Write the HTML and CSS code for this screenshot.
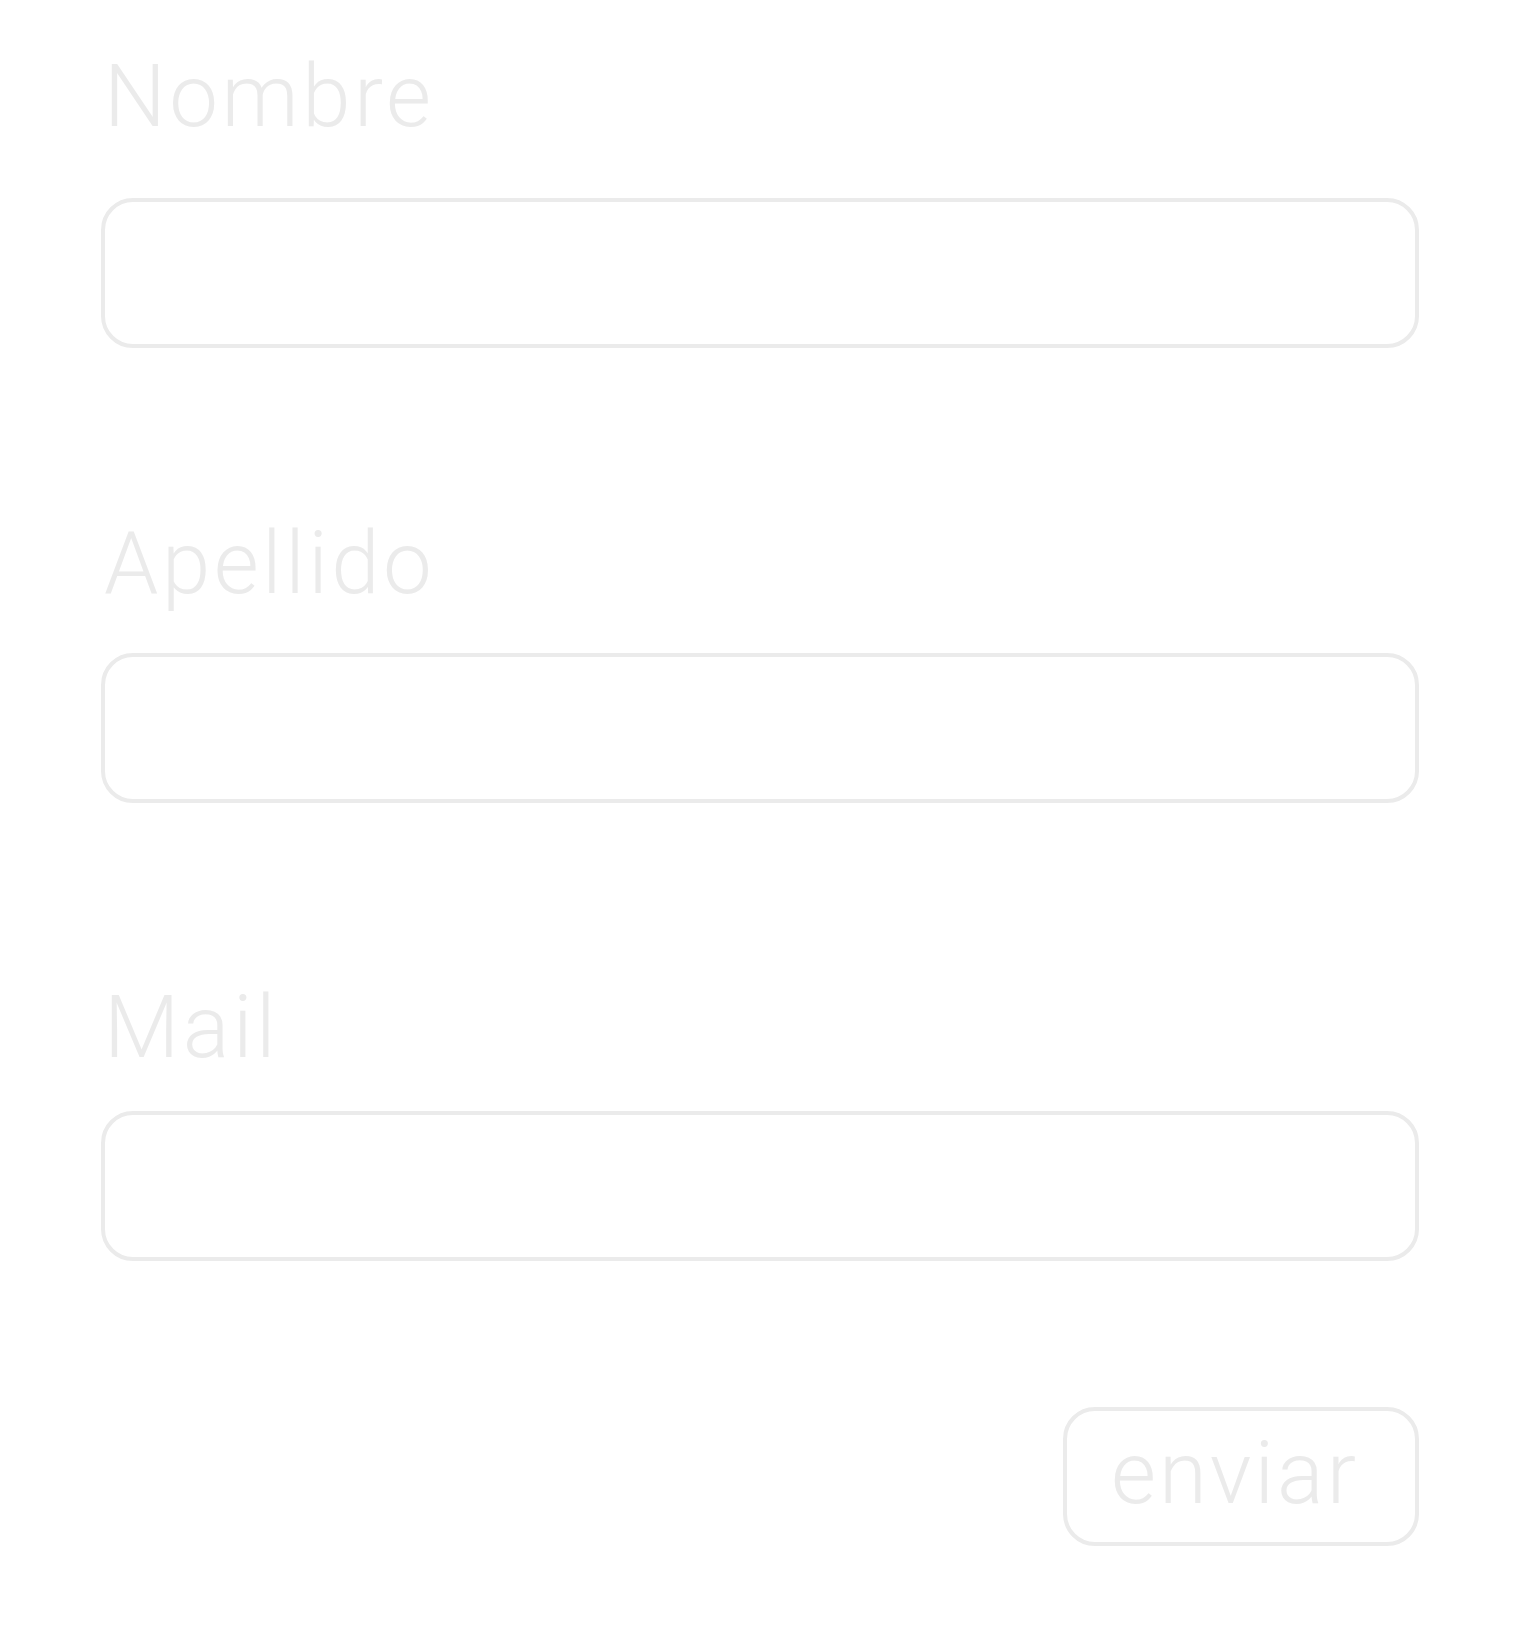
FILE: index.html
```html
<!DOCTYPE html>
<html lang="es">
<head>
<meta charset="utf-8">
<title>Formulario</title>
<link rel="stylesheet" href="styles.css">
</head>
<body>
<form class="form">
  <div class="field field-1">
    <label class="label" for="nombre">Nombre</label>
    <input class="input" id="nombre" type="text">
  </div>
  <div class="field field-2">
    <label class="label" for="apellido">Apellido</label>
    <input class="input" id="apellido" type="text">
  </div>
  <div class="field field-3">
    <label class="label" for="mail">Mail</label>
    <input class="input" id="mail" type="email">
  </div>
  <div class="actions">
    <button class="btn" type="button">enviar</button>
  </div>
</form>
</body>
</html>
```

FILE: styles.css
```css
html, body {
  margin: 0;
  padding: 0;
  background: #ffffff;
}
.form {
  display: flex;
  flex-direction: column;
  width: 1318px;
  margin-left: 101px;
  padding-top: 53px;
  font-family: Roboto, "Liberation Sans", sans-serif;
  font-weight: 300;
  color: #ebebeb;
}
.field {
  display: flex;
  flex-direction: column;
}
.label {
  display: block;
  font-size: 87px;
  line-height: 87px;
  height: 87px;
  padding-left: 3px;
  letter-spacing: 3.5px;
  color: #ebebeb;
}
.field-1 .label { margin-bottom: 58px; }
.field-2 { margin-top: 172px; }
.field-2 .label { margin-bottom: 46px; }
.field-3 { margin-top: 181px; }
.field-3 .label { margin-bottom: 40px; }
.input {
  box-sizing: border-box;
  width: 100%;
  height: 150px;
  margin: 0;
  border: 4px solid #ebebeb;
  border-radius: 32px;
  background: #fff;
  outline: none;
  font: inherit;
}
.actions {
  display: flex;
  justify-content: flex-end;
  margin-top: 146px;
}
.btn {
  box-sizing: border-box;
  width: 356px;
  height: 139px;
  border: 4px solid #ebebeb;
  border-radius: 32px;
  background: #fff;
  color: #ebebeb;
  font-family: Roboto, "Liberation Sans", sans-serif;
  font-weight: 300;
  font-size: 87px;
  letter-spacing: 3px;
  line-height: 1;
  padding: 0 12px 6px 0;
  cursor: pointer;
}
```
